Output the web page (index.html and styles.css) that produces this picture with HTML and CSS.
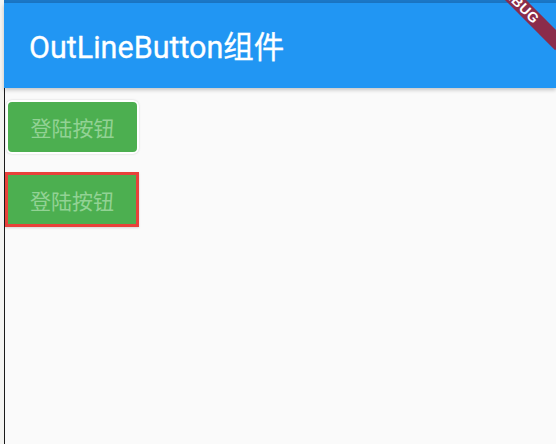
FILE: index.html
```html
<!DOCTYPE html>
<html lang="zh">
<head>
<meta charset="utf-8">
<link rel="stylesheet" href="styles.css">
</head>
<body>
<div class="page">
  <div class="gutter"></div>
  <div class="screen">
    <div class="statusbar"></div>
    <header class="appbar">
      <h1 class="title">OutLineButton组件</h1>
    </header>
    <main class="content">
      <button class="btn btn-rounded">登陆按钮</button>
      <button class="btn btn-outlined">登陆按钮</button>
    </main>
  </div>
  <div class="debug-banner">DEBUG</div>
</div>
</body>
</html>
```

FILE: styles.css
```css
html, body {
  margin: 0;
  padding: 0;
  background: #ffffff;
}
.page {
  position: relative;
  width: 556px;
  height: 444px;
  display: flex;
  overflow: hidden;
}
.gutter {
  width: 4px;
  background: #f4f4f2;
}
.screen {
  flex: 1;
  display: flex;
  flex-direction: column;
}
.statusbar {
  height: 3px;
  background: #1b77c6;
}
.appbar {
  position: relative;
  z-index: 2;
  height: 85px;
  background: #2196f3;
  display: flex;
  align-items: center;
  padding-left: 25px;
  box-shadow: 0 2px 4px rgba(0, 0, 0, 0.22);
}
.title {
  margin: 0;
  color: #ffffff;
  font-family: Roboto, "Noto Sans CJK SC", sans-serif;
  font-weight: 400;
  font-size: 30.5px;
  line-height: 34px;
  padding-top: 4px;
  -webkit-text-stroke: 0.3px #ffffff;
}
.content {
  flex: 1;
  background: #fafafa;
  border-left: 1px solid #1a1a1a;
  display: flex;
  flex-direction: column;
  align-items: flex-start;
  padding-top: 12px;
}
.btn {
  display: flex;
  align-items: center;
  justify-content: center;
  background: #4caf50;
  color: #92d294;
  font-family: "Noto Sans CJK SC", sans-serif;
  font-size: 21px;
  padding: 0;
  cursor: pointer;
}
.btn-rounded {
  margin-left: 1px;
  width: 133px;
  height: 54px;
  border: 2px solid #ffffff;
  border-radius: 6px;
  box-shadow: 0 0 2px rgba(0, 0, 0, 0.18);
}
.btn-outlined {
  margin-top: 18px;
  width: 134px;
  height: 55px;
  border: 3px solid #e8413a;
  border-radius: 0;
  box-shadow: 0 1px 2px rgba(0, 0, 0, 0.15);
}
.debug-banner {
  position: absolute;
  z-index: 5;
  left: 458px;
  top: -5px;
  width: 120px;
  height: 15px;
  line-height: 15px;
  background: #8b2c4b;
  color: #ffffff;
  text-align: center;
  font-family: "Liberation Sans", sans-serif;
  font-weight: 700;
  font-size: 14px;
  letter-spacing: 0.5px;
  transform: rotate(45deg);
}
```
